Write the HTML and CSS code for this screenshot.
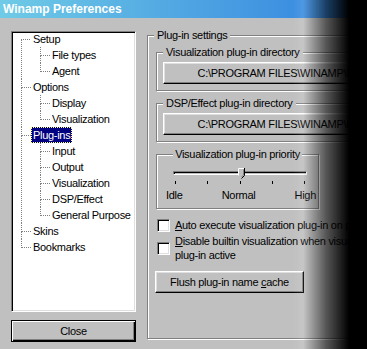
FILE: index.html
```html
<!DOCTYPE html>
<html lang="en">
<head>
  <meta charset="UTF-8">
  <title>Winamp Preferences</title>
  <link rel="stylesheet" href="styles.css">
</head>
<body>
  <div class="window">
    <div class="titlebar">Winamp Preferences</div>
    <div class="content">
      <div class="sidebar">
        <div class="tree">
          <ul>
            <li><span>Setup</span>
              <ul>
                <li><span>File types</span></li>
                <li><span>Agent</span></li>
              </ul>
            </li>
            <li><span>Options</span>
              <ul>
                <li><span>Display</span></li>
                <li><span>Visualization</span></li>
              </ul>
            </li>
            <li><span class="selected">Plug-ins</span>
              <ul>
                <li><span>Input</span></li>
                <li><span>Output</span></li>
                <li><span>Visualization</span></li>
                <li><span>DSP/Effect</span></li>
                <li><span>General Purpose</span></li>
              </ul>
            </li>
            <li><span>Skins</span></li>
            <li><span>Bookmarks</span></li>
          </ul>
        </div>
        <button class="btn default">Close</button>
      </div>

      <div class="group main">
        <div class="group-title">Plug-in settings</div>

        <div class="group dir">
          <div class="group-title">Visualization plug-in directory</div>
          <button class="btn path">C:\PROGRAM FILES\WINAMP\PLUGINS</button>
        </div>

        <div class="group dir">
          <div class="group-title">DSP/Effect plug-in directory</div>
          <button class="btn path">C:\PROGRAM FILES\WINAMP\PLUGINS</button>
        </div>

        <div class="group priority">
          <div class="group-title centered">Visualization plug-in priority</div>
          <div class="track">
            <svg class="thumb" width="7" height="11" viewBox="0 0 7 11">
              <path d="M0.5 0.5H6.5V7.5L3.5 10.5L0.5 7.5Z" fill="#c0c0c0"/>
              <path d="M0.5 7.5V0.5H6" stroke="#fff" fill="none"/>
              <path d="M6.5 0V7.5L3.5 10.5" stroke="#000" fill="none"/>
              <path d="M5.5 1.5V7L3.5 9" stroke="#808080" fill="none"/>
            </svg>
          </div>
          <div class="ticks"><i></i><i></i><i></i><i></i><i></i></div>
          <div class="scale">
            <span>Idle</span>
            <span>Normal</span>
            <span>High</span>
          </div>
        </div>

        <label class="option">
          <span class="check"></span>
          <span class="text"><u>A</u>uto execute visualization plug-in on playback</span>
        </label>
        <label class="option">
          <span class="check"></span>
          <span class="text"><u>D</u>isable builtin visualization when visualization plug-in active</span>
        </label>

        <button class="btn flush">Flush plug-in name <u>c</u>ache</button>
      </div>
    </div>
  </div>
  <div class="fade"></div>
</body>
</html>
```

FILE: styles.css
```css
body {
  margin: 0;
  overflow: hidden;
  background-color: #c0c0c0;
  font-family: "Liberation Sans", Arial, sans-serif;
  font-size: 11px;
  letter-spacing: -0.3px;
  color: #000;
}
.window {
  width: 460px;
  height: 349px;
  background-color: #c0c0c0;
}
.titlebar {
  height: 17px;
  padding: 1px 0 0 3px;
  line-height: 17px;
  font-size: 12px;
  font-weight: bold;
  letter-spacing: 0;
  color: #fff;
  background: linear-gradient(to right, #6fcbe6, #3b8ee0 300px, #3786e0);
}
.content {
  display: flex;
  align-items: flex-start;
  gap: 11px;
  padding: 10px 0 0 11px;
}
.sidebar {
  display: flex;
  flex-direction: column;
  gap: 8px;
  margin-top: 3px;
  width: 125px;
}

/* tree view */
.tree {
  box-sizing: border-box;
  height: 281px;
  background-color: #fff;
  border: 1px solid;
  border-color: #808080 #fff #fff #808080;
  box-shadow: inset 1px 1px #000, inset -1px -1px #dfdfdf;
  overflow: hidden;
}
.tree ul {
  list-style: none;
  margin: 0;
  padding: 0;
}
.tree > ul {
  margin-top: -1px;
  padding-left: 9px;
}
.tree ul ul {
  margin-left: 9px;
}
.tree li {
  position: relative;
  padding-left: 10px;
  line-height: 16px;
}
.tree li::before {
  content: '';
  position: absolute;
  left: 0;
  top: 0;
  width: 9px;
  height: 8px;
  border-left: 1px dotted #808080;
  border-bottom: 1px dotted #808080;
}
.tree li::after {
  content: '';
  position: absolute;
  left: 0;
  top: 9px;
  bottom: 0;
  border-left: 1px dotted #808080;
}
.tree li:last-child::after {
  display: none;
}
.tree > ul > li:first-child::before {
  border-left: none;
}
.tree span {
  display: inline-block;
  padding: 0 2px;
  line-height: 16px;
  white-space: nowrap;
}
.tree span.selected {
  background-color: #000080;
  color: #fff;
  outline: 1px dotted #ffff80;
  outline-offset: -1px;
}

/* buttons */
.btn {
  box-sizing: border-box;
  height: 22px;
  padding: 0;
  font: inherit;
  letter-spacing: inherit;
  color: #000;
  background-color: #c0c0c0;
  border: 1px solid;
  border-color: #fff #000 #000 #fff;
  box-shadow: inset -1px -1px #808080, inset 1px 1px #dfdfdf;
  white-space: nowrap;
}
.btn.default {
  width: 125px;
  border-color: #000;
  box-shadow: inset 1px 1px #fff, inset -1px -1px #000, inset -2px -2px #808080;
}
.btn.path {
  display: block;
  width: 100%;
  margin-top: 3px;
}
.btn.flush {
  display: block;
  width: 149px;
  margin: 9px 0 0 -1px;
}

/* group boxes */
.group {
  border: 1px solid #808080;
  box-shadow: 1px 1px 0 #fff, inset 1px 1px 0 #fff;
}
.group-title {
  width: fit-content;
  margin: -8px 0 0 0;
  padding: 0 3px;
  line-height: 14px;
  background-color: #c0c0c0;
  white-space: nowrap;
}
.group-title.centered {
  margin: -8px auto 0;
  padding: 0 2px;
}
.group.main {
  box-sizing: border-box;
  width: 296px;
  margin-top: 7px;
  padding: 0 8px 45px 8px;
}
.group.main > .group-title {
  margin-left: -2px;
}
.group.dir {
  margin-top: 10px;
  padding: 0 6px 6px 6px;
}
.group.dir + .group {
  margin-top: 12px;
}
.group.priority {
  box-sizing: border-box;
  width: 163px;
  padding-bottom: 6px;
}

/* slider */
.track {
  position: relative;
  box-sizing: border-box;
  height: 4px;
  margin: 10px 11px 0 16px;
  border: 1px solid;
  border-color: #808080 #fff #fff #808080;
  box-shadow: inset 1px 1px #000;
}
.thumb {
  position: absolute;
  left: 64px;
  top: -4px;
  display: block;
}
.ticks {
  display: flex;
  justify-content: space-between;
  margin: 6px 13px 0 18px;
}
.ticks i {
  width: 1px;
  height: 3px;
  background-color: #000;
}
.scale {
  display: flex;
  justify-content: space-between;
  margin: 4px 2px 0 9px;
  line-height: 14px;
}

/* checkboxes */
.option {
  display: flex;
  align-items: center;
  gap: 5px;
  margin: 9px 0 0 1px;
}
.option + .option {
  margin-top: 2px;
}
.check {
  flex: none;
  box-sizing: border-box;
  width: 13px;
  height: 13px;
  background-color: #fff;
  border: 1px solid;
  border-color: #808080 #fff #fff #808080;
  box-shadow: inset 1px 1px #000, inset -1px -1px #dfdfdf;
}
.option .text {
  width: 225px;
  line-height: 14px;
}

.fade {
  position: fixed;
  inset: 0;
  pointer-events: none;
  background: linear-gradient(to right, rgba(0, 0, 0, 0) 292px, rgba(255, 255, 255, 0.1) 303px, rgba(0, 0, 0, 0.55) 326px, #000 349px);
}
```
